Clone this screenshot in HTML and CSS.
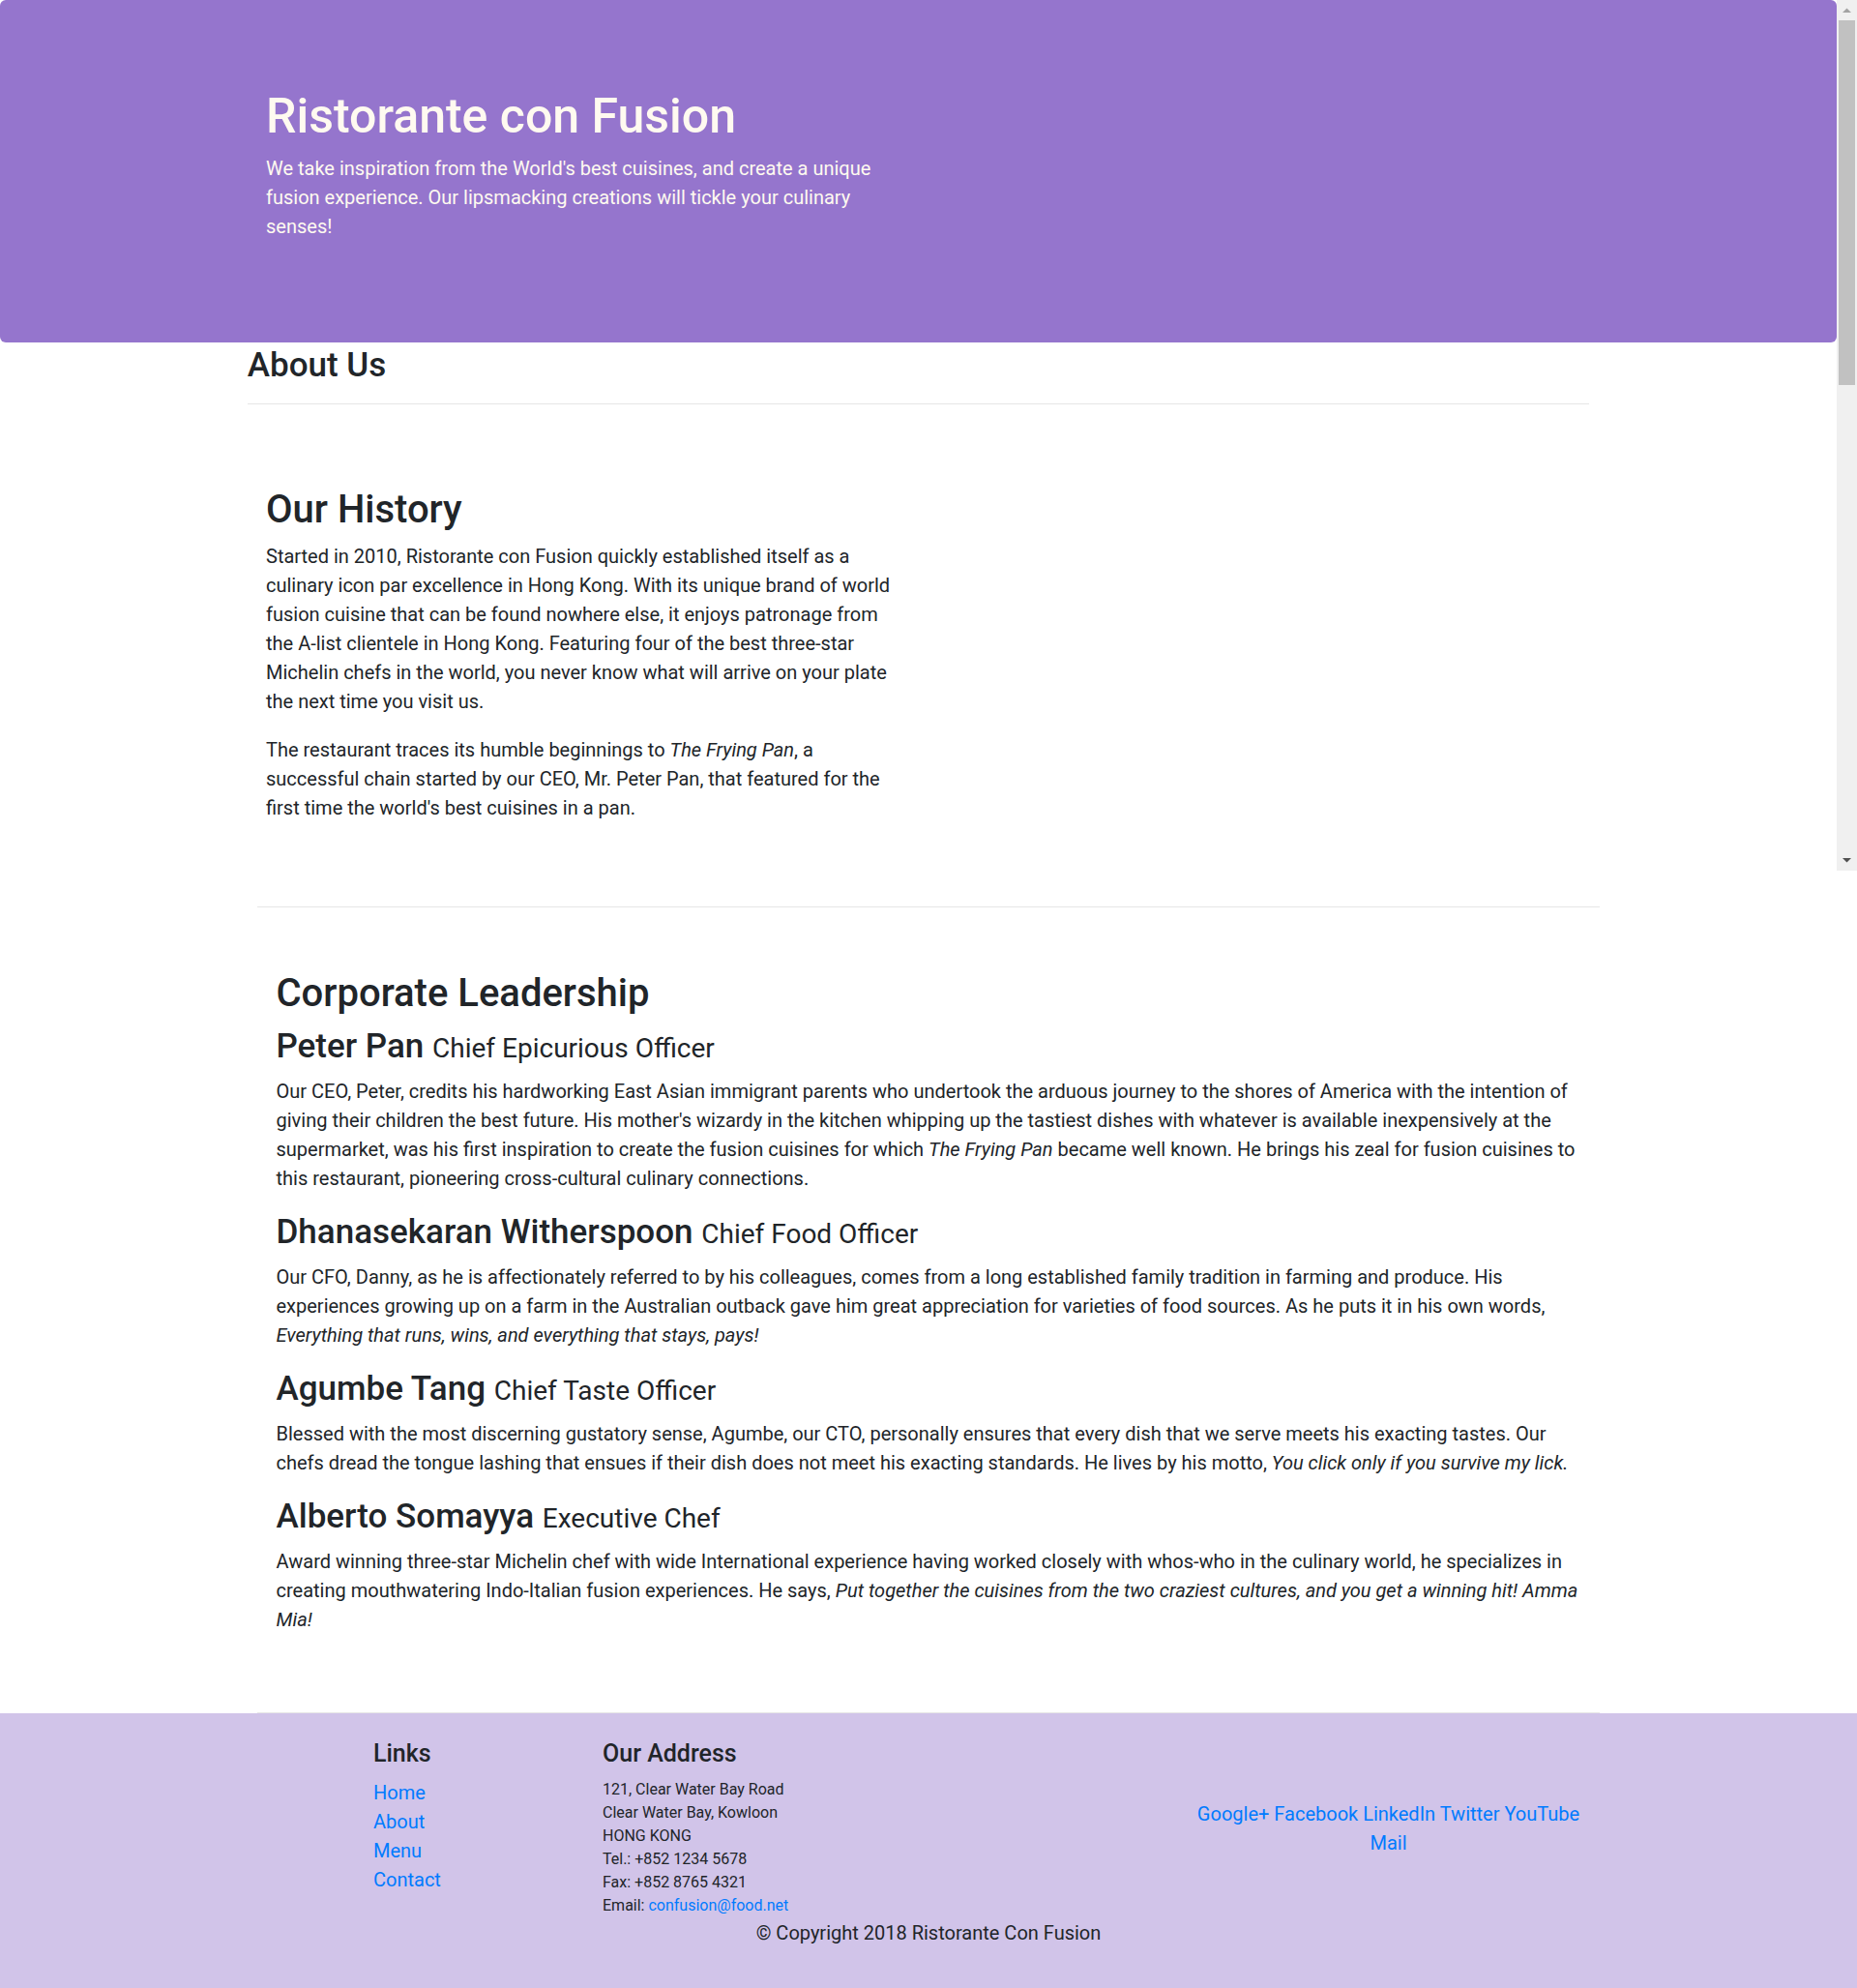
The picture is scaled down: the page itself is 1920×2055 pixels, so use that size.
FILE: index.html
```html
<!DOCTYPE html>
<html lang="en">
<head>
<meta charset="utf-8">
<title>Ristorante con Fusion: About Us</title>
<link rel="stylesheet" href="styles.css">
</head>
<body>
<div class="viewport">
  <div class="viewport-content">
    <header class="jumbotron">
      <div class="container">
        <div class="half">
          <h1>Ristorante con Fusion</h1>
          <p>We take inspiration from the World's best cuisines, and create a unique fusion experience. Our lipsmacking creations will tickle your culinary senses!</p>
        </div>
      </div>
    </header>
    <div class="container">
      <h3 class="page-title">About Us</h3>
      <hr class="rule">
      <section class="half history">
        <h2>Our History</h2>
        <p>Started in 2010, Ristorante con Fusion quickly established itself as a culinary icon par excellence in Hong Kong. With its unique brand of world fusion cuisine that can be found nowhere else, it enjoys patronage from the A-list clientele in Hong Kong. Featuring four of the best three-star Michelin chefs in the world, you never know what will arrive on your plate the next time you visit us.</p>
        <p>The restaurant traces its humble beginnings to <em>The Frying Pan</em>, a successful chain started by our CEO, Mr. Peter Pan, that featured for the first time the world's best cuisines in a pan.</p>
      </section>
    </div>
  </div>
  <div class="scrollbar" aria-hidden="true">
    <div class="sb-btn sb-up"><svg width="9" height="5" viewBox="0 0 9 5"><polygon points="0,5 4.5,0.5 9,5"/></svg></div>
    <div class="sb-track"><div class="sb-thumb"></div></div>
    <div class="sb-btn sb-down"><svg width="9" height="5" viewBox="0 0 9 5"><polygon points="0,0 9,0 4.5,4.5"/></svg></div>
  </div>
</div>

<main class="container main">
  <hr class="rule rule-top">
  <section class="leaders">
    <h2>Corporate Leadership</h2>
    <article class="leader">
      <h3>Peter Pan <small>Chief Epicurious Officer</small></h3>
      <p>Our CEO, Peter, credits his hardworking East Asian immigrant parents who undertook the arduous journey to the shores of America with the intention of giving their children the best future. His mother's wizardy in the kitchen whipping up the tastiest dishes with whatever is available inexpensively at the supermarket, was his first inspiration to create the fusion cuisines for which <em>The Frying Pan</em> became well known. He brings his zeal for fusion cuisines to this restaurant, pioneering cross-cultural culinary connections.</p>
    </article>
    <article class="leader">
      <h3>Dhanasekaran Witherspoon <small>Chief Food Officer</small></h3>
      <p>Our CFO, Danny, as he is affectionately referred to by his colleagues, comes from a long established family tradition in farming and produce. His experiences growing up on a farm in the Australian outback gave him great appreciation for varieties of food sources. As he puts it in his own words, <em>Everything that runs, wins, and everything that stays, pays!</em></p>
    </article>
    <article class="leader">
      <h3>Agumbe Tang <small>Chief Taste Officer</small></h3>
      <p>Blessed with the most discerning gustatory sense, Agumbe, our CTO, personally ensures that every dish that we serve meets his exacting tastes. Our chefs dread the tongue lashing that ensues if their dish does not meet his exacting standards. He lives by his motto, <em>You click only if you survive my lick.</em></p>
    </article>
    <article class="leader">
      <h3>Alberto Somayya <small>Executive Chef</small></h3>
      <p>Award winning three-star Michelin chef with wide International experience having worked closely with whos-who in the culinary world, he specializes in creating mouthwatering Indo-Italian fusion experiences. He says, <em>Put together the cuisines from the two craziest cultures, and you get a winning hit! Amma Mia!</em></p>
    </article>
  </section>
  <hr class="rule rule-bottom">
</main>

<footer class="site-footer">
  <div class="container">
    <div class="footer-grid">
      <div class="col-links">
        <h5>Links</h5>
        <ul class="links">
          <li><a href="#">Home</a></li>
          <li><a href="#">About</a></li>
          <li><a href="#">Menu</a></li>
          <li><a href="#">Contact</a></li>
        </ul>
      </div>
      <div class="col-address">
        <h5>Our Address</h5>
        <address>121, Clear Water Bay Road<br>Clear Water Bay, Kowloon<br>HONG KONG<br>Tel.: +852 1234 5678<br>Fax: +852 8765 4321<br>Email: <a href="mailto:confusion@food.net">confusion@food.net</a></address>
      </div>
      <div class="col-social">
        <a href="#">Google+</a> <a href="#">Facebook</a> <a href="#">LinkedIn</a> <a href="#">Twitter</a> <a href="#">YouTube</a> <a href="#">Mail</a>
      </div>
    </div>
    <p class="copyright">© Copyright 2018 Ristorante Con Fusion</p>
  </div>
</footer>
</body>
</html>
```

FILE: styles.css
```css
html, body {
  margin: 0;
  padding: 0;
}

body {
  background: #ffffff;
  color: #212529;
  font-family: Roboto, "Liberation Sans", Arial, sans-serif;
  font-size: 20px;
  line-height: 30px;
}

h1, h2, h3, h5 {
  font-weight: 500;
  line-height: 1.2;
  margin: 0;
}

p {
  margin: 0 0 20px;
}

a {
  color: #007bff;
  text-decoration: none;
}

.container {
  width: 1387.5px;
  margin: 0 auto;
}

/* ---------- top viewport with its scrollbar ---------- */
.viewport {
  display: flex;
  height: 900px;
}

.viewport-content {
  flex: 1;
  overflow: hidden;
}

.scrollbar {
  width: 21px;
  flex: none;
  background: #f0f0f0;
  display: flex;
  flex-direction: column;
}

.sb-btn {
  height: 21px;
  display: flex;
  align-items: center;
  justify-content: center;
}

.sb-up svg { fill: #a3a3a3; }
.sb-down svg { fill: #505050; }

.sb-track {
  flex: 1;
  padding: 0 2px;
}

.sb-thumb {
  height: 377px;
  background: #c1c1c1;
}

/* ---------- jumbotron ---------- */
.jumbotron {
  background: #9575cd;
  color: floralwhite;
  border-radius: 6px;
  padding: 90px 0 104px;
}

.half {
  width: 650px;
  margin-left: 19.25px;
}

.jumbotron h1 {
  font-size: 50px;
  margin-bottom: 9px;
}

.jumbotron p {
  margin: 0 0 1px;
}

/* ---------- about ---------- */
.page-title {
  font-size: 35px;
  padding-top: 3px;
}

.rule {
  border: 0;
  border-top: 1px solid #e6e6e6;
  height: 0;
  margin: 18px 0 0;
}

.history {
  padding-top: 85px;
}

.history h2,
.leaders h2 {
  font-size: 40px;
}

.history h2 {
  margin-bottom: 9px;
}

/* ---------- leadership ---------- */
.main {
  display: flex;
  flex-direction: column;
}

.rule-top {
  margin-top: 37px;
}

.rule-bottom {
  margin-top: 61px;
}

.leaders {
  padding: 65px 12px 0 19.25px;
}

.leaders h2 {
  margin-bottom: 10px;
}

.leader h3 {
  font-size: 35px;
  margin-bottom: 10px;
}

.leader h3 small {
  font-size: 80%;
  font-weight: 400;
}

/* ---------- footer ---------- */
.site-footer {
  background: #d1c4e9;
  padding: 27px 0 22px;
}

.footer-grid {
  display: grid;
  grid-template-columns: 237px 594px 437px;
  padding-left: 119.75px;
}

.site-footer h5 {
  font-size: 25px;
  margin-bottom: 10px;
}

.links {
  list-style: none;
  margin: 0;
  padding: 0;
}

.site-footer address {
  font-style: normal;
  font-size: 16px;
  line-height: 24px;
  margin: 0;
}

.col-social {
  align-self: center;
  text-align: center;
  padding: 0 18px;
}

.copyright {
  text-align: center;
  margin: 1px 0 20px;
}
```
